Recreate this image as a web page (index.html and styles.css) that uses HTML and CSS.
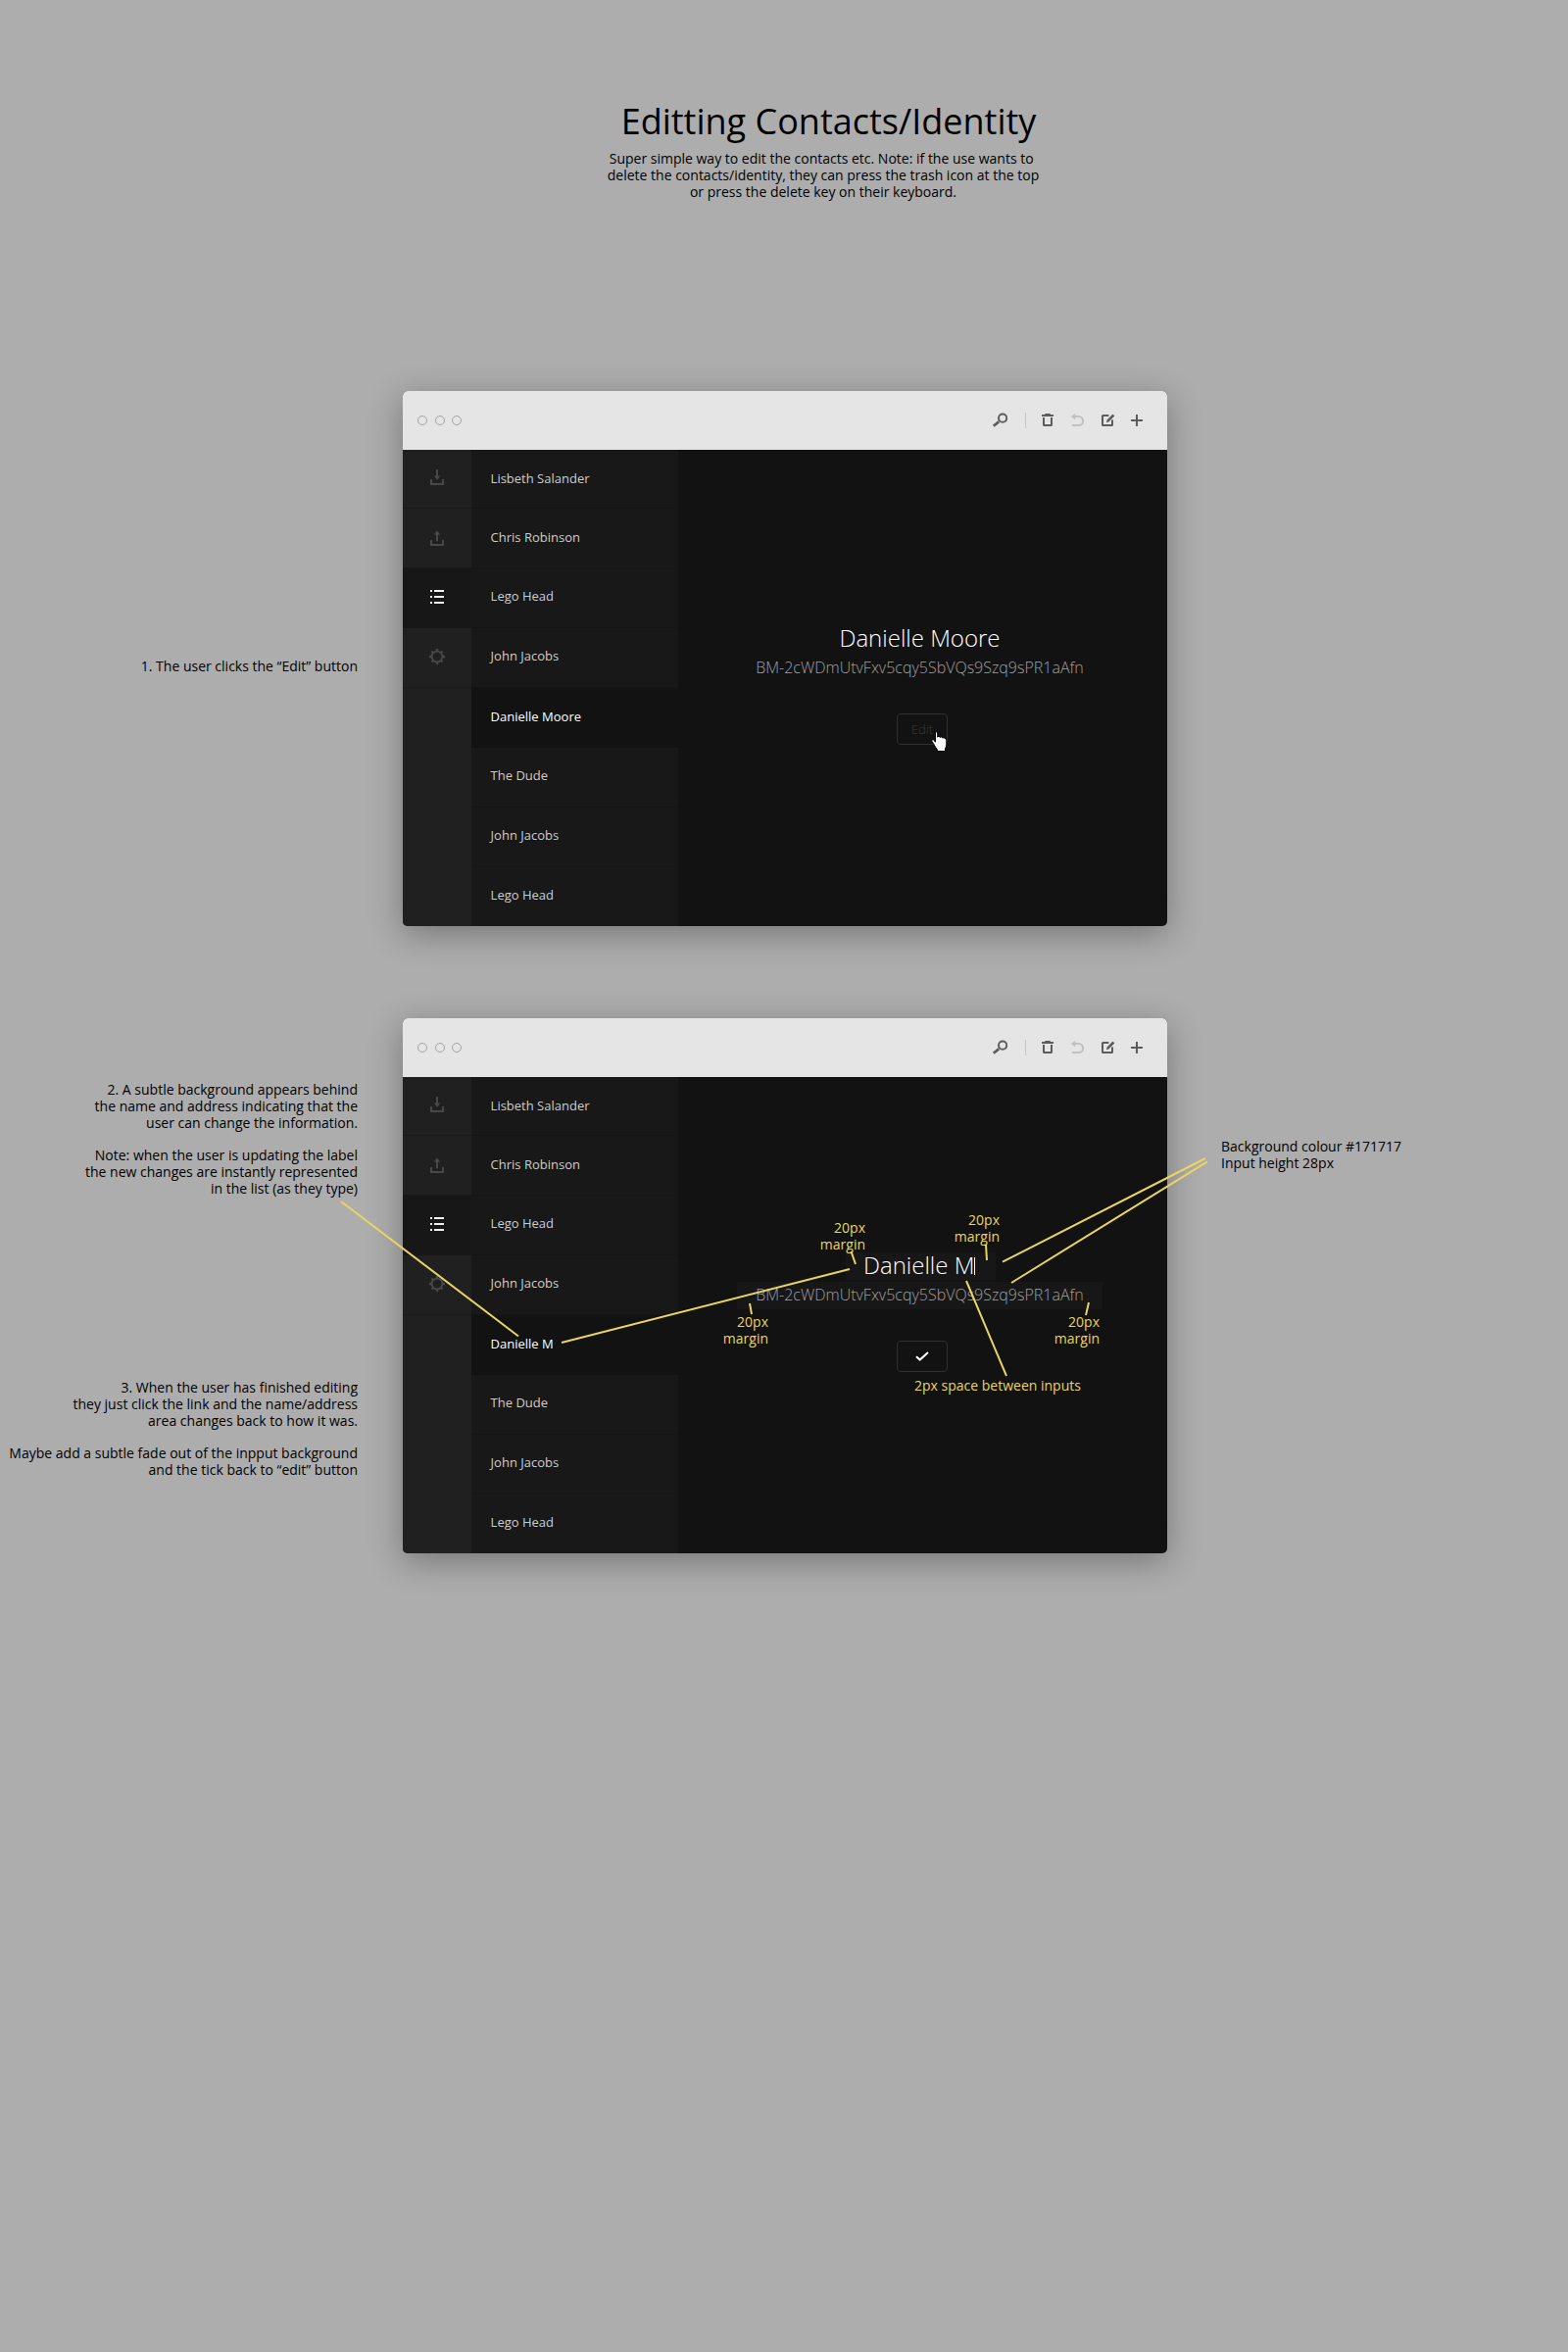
FILE: index.html
```
<!DOCTYPE html>
<html lang="en">
<head>
<meta charset="utf-8">
<title>Editting Contacts/Identity</title>
<link rel="stylesheet" href="styles.css">
</head>
<body>
<svg class="sprite" aria-hidden="true">
  <symbol id="i-search" viewBox="0 0 16 16"><circle cx="11.1" cy="5.7" r="4.1" fill="none" stroke="currentColor" stroke-width="2"/><path d="M1.8 13.8L7.2 9.2" fill="none" stroke="currentColor" stroke-width="2.7"/></symbol>
  <symbol id="i-trash" viewBox="0 0 16 16"><path d="M2 2h3.3V1h5.4v1H14v2H2z" fill="currentColor"/><path d="M4 5v7.4q0 .6.6.6h6.8q.6 0 .6-.6V5" fill="none" stroke="currentColor" stroke-width="2"/></symbol>
  <symbol id="i-undo" viewBox="0 0 16 16"><path d="M4 4h5.6a4.5 4.5 0 0 1 0 9H3" fill="none" stroke="currentColor" stroke-width="2"/><path d="M1.8 4L6.2.8v6.4z" fill="currentColor"/></symbol>
  <symbol id="i-compose" viewBox="0 0 16 16"><path d="M9.4 3H3.6q-.6 0-.6.6v8.8q0 .6.6.6h8.8q.6 0 .6-.6V7.5" fill="none" stroke="currentColor" stroke-width="2"/><path d="M7 10.2l.6-2.6 5.9-6 1.8 1.8-6 6z" fill="currentColor"/></symbol>
  <symbol id="i-plus" viewBox="0 0 16 16"><path d="M8 2v12M2 8h12" fill="none" stroke="currentColor" stroke-width="2"/></symbol>
  <symbol id="i-inbox" viewBox="0 0 16 16"><path d="M2 10v5h12v-5M8 0v8" fill="none" stroke="currentColor" stroke-width="2"/><path d="M4.8 6.6h6.4L8 11z" fill="currentColor"/></symbol>
  <symbol id="i-outbox" viewBox="0 0 16 16"><path d="M2 10v5h12v-5M8 11V3" fill="none" stroke="currentColor" stroke-width="2"/><path d="M4.8 4.7h6.4L8 .2z" fill="currentColor"/></symbol>
  <symbol id="i-list" viewBox="0 0 16 16"><path d="M1 2h2M5 2h10M1 8h2M5 8h10M1 14h2M5 14h10" fill="none" stroke="currentColor" stroke-width="2"/></symbol>
  <symbol id="i-gear" viewBox="0 0 16 16"><circle cx="8" cy="8" r="5.4" fill="none" stroke="currentColor" stroke-width="1.8"/><g stroke="currentColor" stroke-width="2.4"><path d="M8 0v2.4M8 13.6V16M0 8h2.4M13.6 8H16M2.5 2.5l1.5 1.5M12 12l1.5 1.5M2.5 13.5L4 12M12 4l1.5-1.5"/></g></symbol>
</svg>

<header class="intro">
  <h1 class="intro__title">Editting Contacts/Identity</h1>
  <p class="intro__text">Super simple way to edit the contacts etc. Note: if the use wants to&nbsp;<br>delete the contacts/identity, they can press the trash icon at the top<br>or press the delete key on their keyboard.</p>
</header>

<main class="steps">
  <section class="step">
    <div class="notes notes--first">
      <p>1. The user clicks the “Edit” button</p>
    </div>
    <div class="window">
      <div class="titlebar">
        <div class="lights"><i></i><i></i><i></i></div>
        <div class="tools">
          <svg><use href="#i-search"/></svg><span class="tools__sep"></span><svg><use href="#i-trash"/></svg><svg class="is-dim"><use href="#i-undo"/></svg><svg><use href="#i-compose"/></svg><svg><use href="#i-plus"/></svg>
        </div>
      </div>
      <div class="panes">
        <nav class="rail">
          <a class="rail__item rail__item--inbox"><svg><use href="#i-inbox"/></svg></a>
          <a class="rail__item rail__item--outbox"><svg><use href="#i-outbox"/></svg></a>
          <a class="rail__item rail__item--active"><svg><use href="#i-list"/></svg></a>
          <a class="rail__item rail__item--gear"><svg><use href="#i-gear"/></svg></a>
        </nav>
        <ul class="contacts">
          <li>Lisbeth Salander</li>
          <li>Chris Robinson</li>
          <li>Lego Head</li>
          <li>John Jacobs</li>
          <li class="is-selected">Danielle Moore</li>
          <li>The Dude</li>
          <li>John Jacobs</li>
          <li>Lego Head</li>
        </ul>
        <div class="detail">
          <div class="fields">
            <div class="field field--name">Danielle Moore</div>
            <div class="field field--address">BM-2cWDmUtvFxv5cqy5SbVQs9Szq9sPR1aAfn</div>
          </div>
          <div class="button">Edit
            <svg class="cursor" viewBox="0 0 17 22"><path d="M4.500 2Q4.500.8 5.600.8T6.700 2V6.200q.2-.8 1.300-.8t1.400 1.200q.2-.7 1.300-.6t1.300 1.200q.2-.6 1.200-.5t1.300 1.200q1.300-.2 1.300 1.200V14q0 2-1.300 3.800v2.700H6.300V18.500Q4.800 17 3.500 14.500T.9 10.300Q.5 9 1.700 8.800q1 0 1.900 1.200l.9 1.200z" fill="#fff" stroke="#000"/></svg>
          </div>
        </div>
      </div>
    </div>
  </section>

  <section class="step">
    <div class="notes notes--second">
      <p>2. A subtle background appears behind<br>the name and address indicating that the<br>user can change the information.<br><br>Note: when the user is updating the label<br>the new changes are instantly represented<br>in the list (as they type)</p>
      <p>3. When the user has finished editing<br>they just click the link and the name/address<br>area changes back to how it was.<br><br>Maybe add a subtle fade out of the inpput background<br>and the tick back to “edit” button</p>
    </div>
    <div class="window">
      <div class="titlebar">
        <div class="lights"><i></i><i></i><i></i></div>
        <div class="tools">
          <svg><use href="#i-search"/></svg><span class="tools__sep"></span><svg><use href="#i-trash"/></svg><svg class="is-dim"><use href="#i-undo"/></svg><svg><use href="#i-compose"/></svg><svg><use href="#i-plus"/></svg>
        </div>
      </div>
      <div class="panes">
        <nav class="rail">
          <a class="rail__item rail__item--inbox"><svg><use href="#i-inbox"/></svg></a>
          <a class="rail__item rail__item--outbox"><svg><use href="#i-outbox"/></svg></a>
          <a class="rail__item rail__item--active"><svg><use href="#i-list"/></svg></a>
          <a class="rail__item rail__item--gear"><svg><use href="#i-gear"/></svg></a>
        </nav>
        <ul class="contacts">
          <li>Lisbeth Salander</li>
          <li>Chris Robinson</li>
          <li>Lego Head</li>
          <li>John Jacobs</li>
          <li class="is-selected">Danielle M</li>
          <li>The Dude</li>
          <li>John Jacobs</li>
          <li>Lego Head</li>
        </ul>
        <div class="detail">
          <div class="fields">
            <div class="field field--name is-editing">Danielle M<span class="caret"></span></div>
            <div class="field field--address is-editing">BM-2cWDmUtvFxv5cqy5SbVQs9Szq9sPR1aAfn</div>
          </div>
          <div class="button"><svg class="tick" viewBox="0 0 14 10"><path d="M1 5.200L4.700 8.600 13 1" fill="none" stroke="#fff" stroke-width="2"/></svg></div>
        </div>
      </div>
    </div>
    <p class="aside">Background colour #171717<br>Input height 28px</p>
  </section>
</main>

<svg class="leaders" viewBox="0 0 1600 2400" fill="none" stroke="#e8d562" stroke-width="2">
  <path d="M348 1226L529 1363.500M573 1370L867 1295M1023 1287.700L1230 1182M1032 1309L1232 1185.300M986 1307L1027 1404"/>
  <path d="M868.500 1277L873 1290M1006 1270L1007 1286M765 1330L767 1341M1111 1329L1108 1342"/>
</svg>
<p class="callout callout--name-left">20px<br>margin</p>
<p class="callout callout--name-right">20px<br>margin</p>
<p class="callout callout--address-left">20px<br>margin</p>
<p class="callout callout--address-right">20px<br>margin</p>
<p class="callout callout--space">2px space between inputs</p>
</body>
</html>
```
FILE: styles.css
```
* { box-sizing: border-box; }

body {
  position: relative;
  width: 1600px;
  height: 2400px;
  margin: 0;
  background: #adadad;
  color: #000;
  font: 14px/16.8px "Open Sans", sans-serif;
}

p, h1, ul { margin: 0; padding: 0; }

.sprite { position: absolute; width: 0; height: 0; }

.intro {
  height: 399px;
  padding: 100px 0 0 80px;
  text-align: center;
}
.intro__title {
  margin-bottom: 6px;
  padding-left: 11px;
  font-size: 36px;
  font-weight: 400;
  line-height: 48px;
}

.steps {
  display: grid;
  row-gap: 94px;
}
.step {
  display: grid;
  grid-template-columns: 365px 780px 1fr;
  column-gap: 46px;
}

.notes { text-align: right; white-space: nowrap; justify-self: end; }
.notes--first { padding-top: 273px; }
.notes--second {
  display: flex;
  flex-direction: column;
  gap: 186.4px;
  padding-top: 65px;
}
.aside { padding: 123px 0 0 9px; }

.window {
  height: 546px;
  overflow: hidden;
  border-radius: 5px;
  background: #121212;
  box-shadow: 0 8px 35px rgba(0, 0, 0, .32);
}

.titlebar {
  display: flex;
  align-items: center;
  justify-content: space-between;
  height: 60px;
  padding: 0 23px 0 15px;
  background: #e5e5e5;
}
.lights { display: flex; gap: 7.5px; }
.lights i {
  width: 10px;
  height: 10px;
  border: 1px solid #a3a3a3;
  border-radius: 50%;
}
.tools {
  display: flex;
  align-items: center;
  gap: 14.33px;
  color: #5c5c5c;
}
.tools svg { display: block; width: 16px; height: 16px; }
.tools .is-dim { color: #c0c0c0; }
.tools__sep {
  width: 1px;
  height: 16px;
  margin-left: 3.33px;
  background: #c6c6c6;
}

.panes {
  display: grid;
  grid-template-columns: 70px 211px 1fr;
  height: 486px;
}

.rail { background: #202020; color: #484848; }
.rail__item {
  display: flex;
  justify-content: center;
  height: 60px;
}
.rail__item svg { width: 16px; height: 16px; }
.rail__item--inbox { padding-top: 20px; border-bottom: 1px solid #1b1b1b; }
.rail__item--outbox { padding-top: 22px; }
.rail__item--active { height: 62px; padding-top: 22px; background: #171717; color: #f0f0f0; }
.rail__item--gear { height: 61px; padding-top: 21px; border-bottom: 1px solid #1b1b1b; }

.contacts {
  background: #181818;
  color: #cdcdcd;
  font-size: 13px;
  line-height: 18px;
  list-style: none;
}
.contacts li {
  height: 61px;
  padding: 19px 0 0 19.6px;
  border-bottom: 1px solid #151515;
}
.contacts li:first-child { height: 60px; }
.contacts li:nth-child(-n+2) { padding-top: 20px; }
.contacts li:last-child { height: 60px; border-bottom: 0; }
.contacts .is-selected { padding-top: 20px; border-color: #121212; background: #121212; color: #fff; }

.detail {
  display: flex;
  flex-direction: column;
  align-items: center;
  gap: 32px;
  padding: 179px 1px 0 0;
}
.fields {
  display: flex;
  flex-direction: column;
  align-items: center;
  gap: 2px;
  padding-right: 5px;
  font-weight: 300;
  white-space: nowrap;
}
.field { height: 28px; padding: 0 19px; }
.field--name { color: #fff; font-size: 24px; line-height: 25px; }
.field--address { color: #a0a0a0; font-size: 16px; line-height: 26px; }
.field.is-editing { background: #171717; }
.field--name.is-editing {
  display: flex;
  align-items: flex-start;
  width: 153px;
  margin-left: 2px;
  padding: 0 0 0 18px;
}
.caret { width: 1px; height: 18px; margin-top: 5px; background: #fff; }

.button {
  position: relative;
  display: flex;
  align-items: center;
  justify-content: center;
  width: 52px;
  height: 32px;
  border: 1px solid #2f2f2f;
  border-radius: 4px;
  color: #3a3a3a;
  font-size: 13px;
  font-weight: 300;
}
.cursor { position: absolute; top: 17px; left: 34px; width: 17px; height: 22px; }
.tick { width: 14px; height: 10px; margin-right: 1px; }

.leaders {
  position: absolute;
  inset: 0;
  width: 1600px;
  height: 2400px;
  pointer-events: none;
}
.callout {
  position: absolute;
  color: #e8d562;
  text-align: right;
  white-space: nowrap;
}
.callout--name-left { top: 1245px; right: 717px; }
.callout--name-right { top: 1237px; right: 580px; }
.callout--address-left { top: 1341px; right: 816px; }
.callout--address-right { top: 1341px; right: 478px; }
.callout--space { top: 1406px; left: 933px; }
```
